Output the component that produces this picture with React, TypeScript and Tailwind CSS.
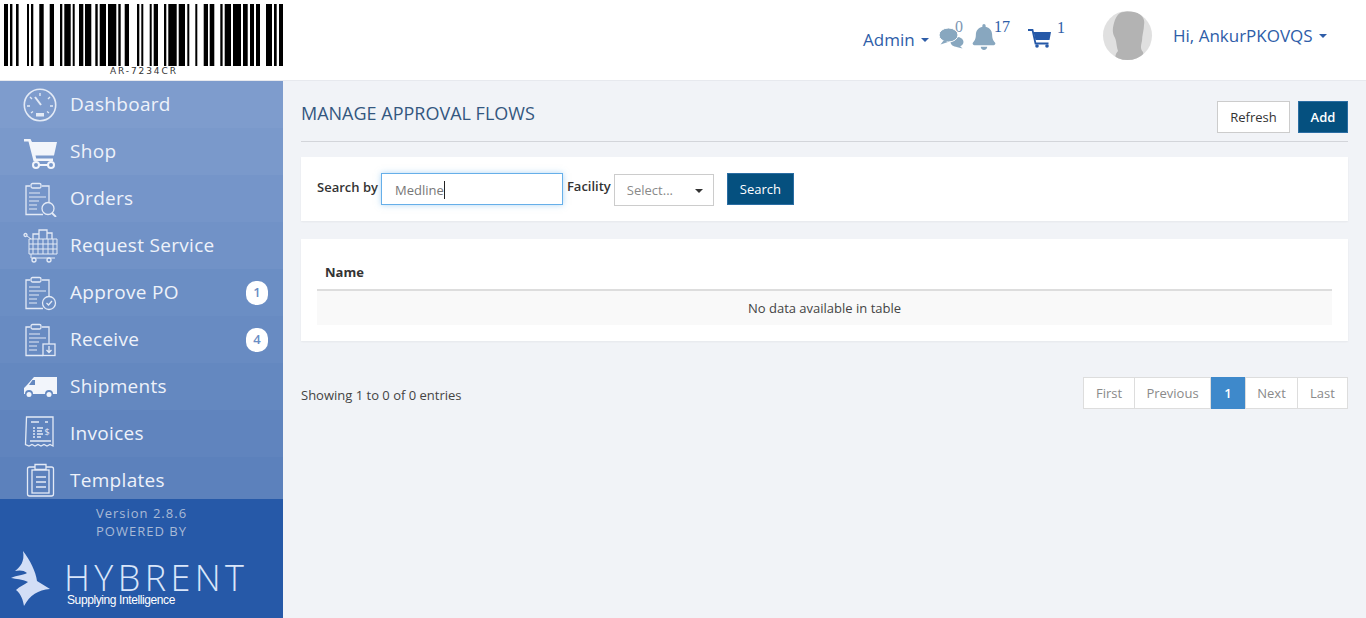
import { FaBell } from "react-icons/fa";
import type { ReactNode } from "react";

const BARS: [number, number][] = [
  [4, 4], [10, 2.4], [16, 2.6], [27, 2], [31, 2.3], [39.3, 4.4], [49.7, 4.3], [60, 2.3], [64.3, 6.4], [72.7, 2],
  [79, 4.3], [85, 6.3], [95.3, 2.4], [99.7, 6.3], [108, 8.3], [118.3, 2.4], [124.7, 4.3], [137, 2.3], [141.3, 2],
  [149.7, 2], [153.7, 4.3], [164, 2.3], [168.3, 8.4], [178.7, 6.3], [187.3, 2], [195.3, 2], [203.7, 4.3], [209.7, 4.6],
  [220.3, 2.3], [224.7, 6.3], [233, 8], [243, 4.7], [250, 4], [256, 4], [266, 6], [274, 2.7], [279, 4],
];

function Clipboard({ children }: { children?: ReactNode }) {
  return (
    <>
      <path d="M8 5H4v28.500h17M20 5h7v17" />
      <rect x="9" y="2.500" width="10" height="4.500" rx="1.500" />
      <path d="M7 12h11M7 16h17M7 20h10M7 24h8M7 28h8" strokeWidth="1.200" />
      {children}
    </>
  );
}

function Outline({ children }: { children: ReactNode }) {
  return (
    <svg viewBox="0 0 36 36" className="h-9 w-9" fill="none" stroke="#e3eaf6" strokeWidth="1.3">
      {children}
    </svg>
  );
}

const icons: Record<string, ReactNode> = {
  dashboard: (
    <Outline>
      <circle cx="18" cy="18" r="15.7" strokeWidth="1.6" />
      <path d="M18 6v3M8 10l2 2M28 10l-2 2M5 19h3M28 19h3M9 26l2-1.500M27 26l-2-1.500" strokeWidth="1.400" />
      <path d="M13 10l6 8" strokeWidth="2" />
      <path d="M14 26h8v3.500h-8z" fill="#e3eaf6" stroke="none" />
    </Outline>
  ),
  shop: (
    <svg viewBox="0 0 36 36" className="h-9 w-9" fill="#f2f5fb">
      <path d="M2 5h6.500l1.500 3h25l-3 13.500H13.500l.7 3H31v2.500H11.500L6.500 7.500H2z" />
      <circle cx="14" cy="31" r="3" fill="none" stroke="#f2f5fb" strokeWidth="2" />
      <circle cx="29" cy="31" r="3" fill="none" stroke="#f2f5fb" strokeWidth="2" />
      <path d="M16 30h10v2H16z" />
    </svg>
  ),
  orders: (
    <Outline>
      <Clipboard>
        <circle cx="26" cy="27.500" r="6" fill="#7595c9" />
        <path d="M30 32l4 4" strokeWidth="1.800" />
      </Clipboard>
    </Outline>
  ),
  service: (
    <Outline>
      <circle cx="3.500" cy="7" r="1.500" />
      <path d="M5 8l4 3M7 11h28v15H7zM7 16h28M7 21h28M11 11v15M16 11v15M21 11v15M26 11v15M31 11v15M9 26v4h24" strokeWidth="1" />
      <path d="M11 11V6h6v5M17 11V2h8v9M25 11V5h5v6" />
      <circle cx="12" cy="32" r="2" />
      <circle cx="27" cy="32" r="2" />
    </Outline>
  ),
  approve: (
    <Outline>
      <Clipboard>
        <circle cx="27" cy="28" r="6.500" fill="#6b8ec4" />
        <path d="M24.500 28l2 2 3.500-4" />
      </Clipboard>
    </Outline>
  ),
  receive: (
    <Outline>
      <Clipboard>
        <rect x="21" y="22" width="12" height="11.500" fill="#688bc2" />
        <path d="M27 24v6M24.500 28l2.500 2.500 2.500-2.500" />
      </Clipboard>
    </Outline>
  ),
  truck: (
    <svg viewBox="0 0 36 36" className="h-9 w-9" fill="#f2f5fb">
      <path d="M12 8h23v17h-4a4 4 0 0 0-8 0H11a4 4 0 0 0-8 0H2v-6l3-3z" />
      <path d="M10.500 11L7 16h6v-5z" fill="#6488c0" />
      <circle cx="7" cy="25.500" r="2.500" />
      <circle cx="27" cy="25.500" r="2.500" />
    </svg>
  ),
  invoice: (
    <Outline>
      <path d="M4.500 1h26.500v29l-3-1.500-3 1.500-3-1.500-3 1.500-3-1.500-3 1.500-3-1.500-3 1.500-3.500-1.500z" />
      <path d="M9 6h8M23 6h3M11 12h2M15 12h6M11 15h2M15 15h5M11 18h2M15 18h6M11 21h2M15 21h4M8 25h21" />
      <text x="25" y="19" fontSize="9" fill="#e3eaf6" stroke="none" textAnchor="middle" fontFamily="'Open Sans', sans-serif">$</text>
    </Outline>
  ),
  templates: (
    <Outline>
      <rect x="5.500" y="4" width="26" height="29" rx="2" />
      <rect x="10" y="7" width="17" height="23" />
      <path d="M13 1.500h11v5H13z" fill="#5c81bc" />
      <path d="M14 14h10M14 19h10M14 24h10" />
    </Outline>
  ),
};

const menu = [
  { label: "Dashboard", icon: "dashboard", bg: "bg-[#7e9ccd]" },
  { label: "Shop", icon: "shop", bg: "bg-[#7a99cb]" },
  { label: "Orders", icon: "orders", bg: "bg-[#7595c9]" },
  { label: "Request Service", icon: "service", bg: "bg-[#7192c7]" },
  { label: "Approve PO", icon: "approve", bg: "bg-[#6b8ec4]", badge: "1" },
  { label: "Receive", icon: "receive", bg: "bg-[#688bc2]", badge: "4" },
  { label: "Shipments", icon: "truck", bg: "bg-[#6488c0]" },
  { label: "Invoices", icon: "invoice", bg: "bg-[#6084be]" },
  { label: "Templates", icon: "templates", bg: "bg-[#5c81bc]" },
];

function Caret({ className }: { className: string }) {
  return <span className={`inline-block h-0 w-0 border-x-4 border-t-4 border-x-transparent ${className}`} />;
}

function Sidebar() {
  return (
    <aside className="flex w-[283px] shrink-0 flex-col bg-[#2659a8]">
      <nav className="flex h-[418px] flex-col overflow-hidden">
        {menu.map((item) => (
          <div key={item.label} className={`flex h-[47px] shrink-0 items-center pl-[22px] pr-[15px] ${item.bg}`}>
            <span className="mr-3 flex h-9 w-9 shrink-0">{icons[item.icon]}</span>
            <span className="flex-1 text-[19px] tracking-[0.3px] text-[#eef2fa]">{item.label}</span>
            {item.badge && (
              <span className="flex h-6 w-[22px] items-center justify-center rounded-[10px] bg-white text-[13px] font-semibold text-[#6b8ec4]">
                {item.badge}
              </span>
            )}
          </div>
        ))}
      </nav>
      <div className="flex flex-1 flex-col">
        <p className="mt-[5px] text-center text-[13px] leading-[18px] tracking-[1px] text-[#a9bad6]">Version 2.8.6</p>
        <p className="text-center text-[13px] leading-[18px] tracking-[1px] text-[#a9bad6]">POWERED BY</p>
        <div className="mt-[7px] flex h-[60px]">
          <svg viewBox="0 0 60 60" className="ml-[5px] h-[60px] w-[60px] shrink-0">
            <path
              d="M18 4C25 13 31 25 32 34L45 42C33 43 25 48 19 59C18 53 16 47 11 43C15 39 19 38 23 35C17 32 11 32 6 31C12 28 19 28 22 26C19 23 14 23 10 24C15 20 20 15 18 4Z"
              fill="#d2def6"
            />
          </svg>
          <div className="ml-[2px] flex flex-col text-[#d9e6fa]">
            <span className="-ml-[3px] mt-[17px] text-[36px] font-light leading-[28px] tracking-[4.4px]">HYBRENT</span>
            <span className="mt-[2px] font-['Liberation_Sans',sans-serif] text-[12px] font-medium leading-[12px] tracking-[-0.4px] text-white">
              Supplying Intelligence
            </span>
          </div>
        </div>
      </div>
    </aside>
  );
}

function Header() {
  return (
    <header className="flex h-[81px] shrink-0 items-center border-b border-[#e7e9ee] bg-white">
      <svg viewBox="0 0 283 81" className="h-[81px] w-[283px] shrink-0">
        {BARS.map(([x, w]) => (
          <rect key={x} x={x} y="4" width={w} height="62" fill="#000" />
        ))}
      </svg>
      <div className="relative flex-1 self-stretch">
        <div className="absolute left-[580px] top-[30px] flex items-center gap-[6px] text-[17px] leading-5 text-[#2e5da8]">
          Admin <Caret className="border-t-[#2e5da8]" />
        </div>
        <svg viewBox="0 0 26 22" className="absolute left-[656px] top-[27px] h-[22px] w-[26px]" fill="#88a7bf">
          <ellipse cx="18" cy="15" rx="6.500" ry="5" />
          <path d="M20 18l3.500 3.500-6-1.500z" />
          <ellipse cx="9.500" cy="8" rx="9.500" ry="7" stroke="#ffffff" strokeWidth="1" />
          <path d="M5 13L1.500 17.500 9 15z" />
        </svg>
        <span className="absolute left-[672px] top-[19px] font-['Liberation_Serif',serif] text-base leading-4 text-[#7e97b3]">0</span>
        <FaBell className="absolute left-[689px] top-[24px] h-[26px] w-[24px] text-[#88a7bf]" />
        <span className="absolute left-[711px] top-[19px] font-['Liberation_Serif',serif] text-base leading-4 text-[#2e5da8]">17</span>
        <svg viewBox="0 0 23 19" className="absolute left-[745px] top-[29px] h-[19px] w-[23px]">
          <path d="M0 1h4.500l3 13.500h13" fill="none" stroke="#2659a8" strokeWidth="1.800" />
          <path d="M5.500 3H23l-1.500 8H7.500z" fill="#2659a8" />
          <circle cx="9" cy="17" r="1.800" fill="#2659a8" />
          <circle cx="19" cy="17" r="1.800" fill="#2659a8" />
        </svg>
        <span className="absolute left-[774px] top-[20px] font-['Liberation_Serif',serif] text-base leading-4 text-[#2e5da8]">1</span>
        <div className="absolute left-[820px] top-[11px] h-[49px] w-[49px] overflow-hidden rounded-full bg-[#e0e0e0]">
          <svg viewBox="0 0 49 49" className="h-full w-full">
            <path d="M17 2C21 0 30 0 35 2C40 5 42 9 41 14C41 19 39 24 39 30C38 34 37 38 40 41C41 44 40 47 39 49H13C12 46 12 43 15 40C13 34 14 30 11 25C9 20 10 16 11 12C12 8 14 4 17 2Z" fill="#b3b3b3" />
          </svg>
        </div>
        <div className="absolute left-[890px] top-[26px] flex items-center gap-[6px] text-[17px] leading-5 text-[#2e5da8]">
          Hi, AnkurPKOVQS <Caret className="border-t-[#2e5da8]" />
        </div>
      </div>
    </header>
  );
}

function Pager() {
  const cell = "flex items-center justify-center border border-[#dddddd] bg-white pt-[2px] text-[#8a8a8a]";
  return (
    <div className="flex h-8 text-[13px]">
      <span className={`w-[52px] ${cell}`}>First</span>
      <span className={`-ml-px w-[77px] ${cell}`}>Previous</span>
      <span className="flex w-[34px] items-center justify-center bg-[#3e89cb] pt-[2px] font-semibold text-white">1</span>
      <span className={`w-[53px] ${cell}`}>Next</span>
      <span className={`-ml-px w-[51px] ${cell}`}>Last</span>
    </div>
  );
}

export default function App() {
  return (
    <div className="relative flex h-screen flex-col overflow-hidden bg-[#f1f3f7] font-['Open_Sans',sans-serif]">
      <Header />
      <span className="absolute left-[110px] top-[66px] font-['DejaVu_Sans',sans-serif] text-[9px] leading-[10px] tracking-[1.9px] text-[#333]">
        AR-7234CR
      </span>
      <div className="flex min-h-0 flex-1">
        <Sidebar />
        <main className="flex-1 px-[18px]">
          <div className="flex h-[61px] items-center justify-between border-b border-[#d3d5da] pt-[10px]">
            <h1 className="-mt-[7px] text-[18px] leading-6 text-[#34577f]">MANAGE APPROVAL FLOWS</h1>
            <div className="mt-[2px] flex gap-2">
              <button className="h-8 w-[73px] border border-[#cccccc] bg-white pt-[2px] text-[13px] text-[#333]">Refresh</button>
              <button className="h-8 w-[50px] border border-[#2a6da3] bg-[#05507f] pt-[2px] text-[13px] font-semibold text-white">Add</button>
            </div>
          </div>

          <section className="mt-[15px] flex h-16 items-center bg-white pl-4 shadow-[0_1px_2px_rgba(0,0,0,0.05)]">
            <span className="-mt-[2px] mr-[3px] text-[13px] font-semibold text-[#333]">Search by</span>
            <div className="flex h-8 w-[182px] items-center border border-[#66afe9] pl-[13px] pt-[2px] text-[13px] text-[#777] shadow-[0_0_6px_rgba(102,175,233,0.5)]">
              <span className="border-r border-[#222] leading-[18px]">Medline</span>
            </div>
            <span className="-mt-[4px] ml-1 mr-[3px] text-[13px] font-semibold text-[#333]">Facility</span>
            <div className="mt-[2px] flex h-8 w-[100px] items-center justify-between border border-[#cccccc] pl-3 pr-[10px] pt-[2px] text-[13px] text-[#8a8a8a]">
              Select...
              <Caret className="border-t-[#333]" />
            </div>
            <button className="ml-[13px] h-8 w-[67px] border border-[#2a6da3] bg-[#05507f] pt-[2px] text-[13px] font-medium text-white">
              Search
            </button>
          </section>

          <section className="mt-[18px] h-[102px] bg-white px-4 pt-4 shadow-[0_1px_2px_rgba(0,0,0,0.05)]">
            <div className="flex h-[36px] items-center border-b-2 border-[#dddddd] pl-2 pt-[2px] text-[13px] font-bold text-[#333]">Name</div>
            <div className="flex h-[34px] items-center justify-center bg-[#f9f9f9] pt-[2px] text-[13px] text-[#444]">No data available in table</div>
          </section>

          <div className="mt-9 flex items-center justify-between">
            <span className="pt-[6px] text-[13px] text-[#444]">Showing 1 to 0 of 0 entries</span>
            <Pager />
          </div>
        </main>
      </div>
    </div>
  );
}
